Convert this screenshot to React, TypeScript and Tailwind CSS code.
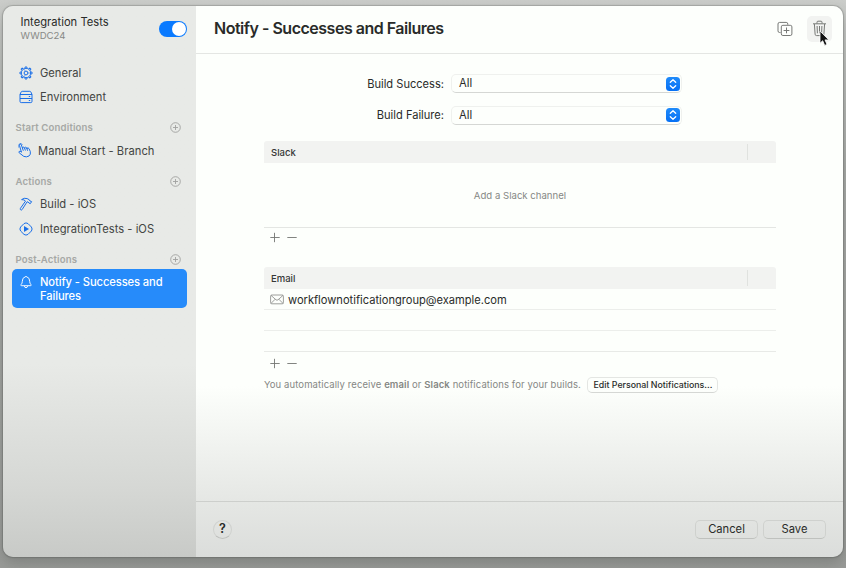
import React from "react";

function GearIcon() {
  const teeth = Array.from({ length: 8 }, (_, i) => i * 45);
  return (
    <svg width="14" height="14" viewBox="0 0 14 14" fill="none" stroke="#1a6fe8" strokeWidth="1">
      <circle cx="7" cy="7" r="4.7" />
      <circle cx="7" cy="7" r="1.9" />
      {teeth.map((a) => (
        <path key={a} d="M5.9 2 L6.3 .9 H7.7 L8.1 2" transform={`rotate(${a} 7 7)`} />
      ))}
      <path d="M6.2 5.1 L5 3 M8.9 7 H11.6 M6.2 8.8 L5 11" strokeWidth="0.5" />
    </svg>
  );
}

function ServerIcon() {
  return (
    <svg width="14" height="14" viewBox="0 0 14 14" fill="none" stroke="#1a6fe8" strokeWidth="1">
      <path d="M1 4.4 L2.2 1.9 Q2.5 1.3 3.2 1.3 H10.8 Q11.5 1.3 11.8 1.9 L13 4.4 V11.4 Q13 12.6 11.8 12.6 H2.2 Q1 12.6 1 11.4 Z M1 4.5 H13 M1 8.5 H13" />
      <path d="M9.8 6.5 H11.2 M9.8 10.5 H11.2" />
    </svg>
  );
}

function HandIcon() {
  return (
    <svg width="14" height="15" viewBox="0 0 14 15" fill="none" stroke="#1a6fe8" strokeWidth="1" strokeLinejoin="round" strokeLinecap="round">
      <path d="M3.3 8.8 L1.5 2.5 Q1.2 1.2 2.1 1 Q3 .8 3.4 2 L4.6 5.6 V4.5 Q5.2 3.8 6.2 4.4 L6.7 5.5 V4.7 Q7.5 3.7 8.6 4.7 L9 6 V5.2 Q10.2 4.4 11 5.6 L12.3 8.5 Q13 11.5 11 13 Q8.5 14.5 5.8 13.4 L1.2 9.8 Q.5 9 1.2 8.4 Q2 8 3.3 8.8 Z" />
      <path d="M4.6 5.6 L5.2 7.4 M6.7 5.5 L7.3 7.2 M9 6 L9.5 7.4" />
      <path d="M.7 4.3 Q0 1.5 1.8 .5 Q3.6 0 4.4 1.6" strokeWidth="0.6" />
    </svg>
  );
}

function HammerIcon() {
  return (
    <svg width="14" height="14" viewBox="0 0 14 14" fill="none" stroke="#1a6fe8" strokeWidth="1" strokeLinejoin="round">
      <path d="M2.6 2.6 Q5 .5 8.2 1.6 L10.3 2.8 L11 4 L12.6 4.6 L11.4 6.6 L10 6.1 L9.2 5 L8.1 4.8 L3.1 12.6 Q2.4 13.4 1.6 12.8 Q.9 12.2 1.4 11.4 L6.5 4.1 Q5.3 2.5 2.6 2.6 Z" />
    </svg>
  );
}

function TestIcon() {
  return (
    <svg width="14" height="14" viewBox="0 0 14 14" fill="none" stroke="#1a6fe8" strokeWidth="1">
      <path d="M5 1.6 Q7 .2 9 1.6 L12.4 5 Q13.8 7 12.4 9 L9 12.4 Q7 13.8 5 12.4 L1.6 9 Q.2 7 1.6 5 Z" />
      <path d="M5 4 L10 7 L5 10 Z" fill="#1a6fe8" stroke="none" />
    </svg>
  );
}

function BellIcon() {
  return (
    <svg width="14" height="14" viewBox="0 0 14 14" fill="none" stroke="#f2f8ff" strokeWidth="1" strokeLinejoin="round">
      <path d="M2.2 10.7 Q1.5 10.3 2.1 9.5 Q3.3 8.4 3.3 6.4 Q3.3 2.6 6 2 Q7 .8 8 2 Q10.7 2.6 10.7 6.4 Q10.7 8.4 11.9 9.5 Q12.5 10.3 11.8 10.7 Z M5.4 10.9 Q5.6 12.7 7 12.7 Q8.4 12.7 8.6 10.9" />
    </svg>
  );
}

function PlusCircle() {
  return (
    <svg width="11" height="11" viewBox="0 0 11 11" fill="none" stroke="#a0a29f" strokeWidth="0.9">
      <circle cx="5.5" cy="5.5" r="4.8" />
      <path d="M5.5 3 V8 M3 5.5 H8" />
    </svg>
  );
}

function SectionHeader({ label }: { label: string }) {
  return (
    <div className="flex h-5 items-center justify-between pl-[12.5px] pr-[15px] text-[9.6px] font-semibold tracking-[0.15px] text-[#a6a8a5]">
      <span className="pt-[2px]">{label}</span>
      <PlusCircle />
    </div>
  );
}

function NavItem({ icon, label, hand = false }: { icon: React.ReactNode; label: string; hand?: boolean }) {
  return (
    <div className="flex h-[24.5px] items-center pl-4 text-[11.2px] text-[#434543]">
      <span className={hand ? "-ml-px mr-[6px]" : "mr-[7px]"}>{icon}</span>
      <span className={hand ? "whitespace-nowrap pt-[2px] tracking-[0.03px]" : "whitespace-nowrap pt-px"}>{label}</span>
    </div>
  );
}

function Sidebar() {
  return (
    <aside className="w-[193px] shrink-0 bg-linear-to-b from-[#e8eae7] from-65% via-[#d5d7d4] via-88% to-[#c8cac7]">
      <div className="flex h-[54.5px] justify-between pl-[17.5px] pr-[9px]">
        <div className="pt-[9px]">
          <div className="text-[11.2px] leading-[14px] text-[#292b29]">Integration Tests</div>
          <div className="text-[9.6px] leading-[13px] text-[#878986]">WWDC24</div>
        </div>
        <div className="mt-[15px] flex h-4 w-7 justify-end rounded-full bg-[#0a7aff] p-px">
          <div className="size-[14px] rounded-full bg-white" />
        </div>
      </div>
      <NavItem icon={<GearIcon />} label="General" />
      <NavItem icon={<ServerIcon />} label="Environment" />
      <div className="h-[7.5px]" />
      <SectionHeader label="Start Conditions" />
      <div className="h-px" />
      <NavItem icon={<HandIcon />} label="Manual Start - Branch" hand />
      <div className="h-[8.5px]" />
      <SectionHeader label="Actions" />
      <div className="h-px" />
      <NavItem icon={<HammerIcon />} label="Build - iOS" />
      <NavItem icon={<TestIcon />} label="IntegrationTests - iOS" />
      <div className="h-[8px]" />
      <SectionHeader label="Post-Actions" />
      <div className="ml-[9px] mr-[9px] flex h-[39px] rounded-[5px] bg-[#268bfa] pl-[7px] pt-[6px] text-white">
        <span className="mr-[7px]"><BellIcon /></span>
        <span className="text-[11.2px] font-medium leading-[14px] tracking-[-0.1px]">Notify - Successes and<br />Failures</span>
      </div>
    </aside>
  );
}

function SelectRow({ label }: { label: string }) {
  return (
    <div className="flex h-[19px] items-center">
      <span className="w-[255px] shrink-0 pr-[7px] pt-px text-right text-[11.1px] text-[#292b29]">{label}</span>
      <div className="flex h-[19px] w-[231px] items-center justify-between rounded-[5px] border border-[#eff1ee] border-b-[#d5d7d4] pl-[7px] pr-[1px] text-[11.2px] text-[#292b29]">
        <span>All</span>
        <span className="flex size-[14px] items-center justify-center rounded-[3.5px] bg-linear-to-b from-[#208bfa] to-[#0670f5]">
          <svg width="8" height="12" viewBox="0 0 8 12" fill="none" stroke="white" strokeWidth="1.3" strokeLinecap="round" strokeLinejoin="round">
            <path d="M1.3 4.3 L4 1.8 L6.7 4.3 M1.3 7.7 L4 10.2 L6.7 7.7" />
          </svg>
        </span>
      </div>
    </div>
  );
}

function TableHeader({ label }: { label: string }) {
  return (
    <div className="flex h-[22px] items-center justify-between rounded-t-[3px] bg-[#f2f3f1] pl-[7px] pr-[28px] text-[9.5px] font-medium text-[#363836]">
      <span className="pt-[2px]">{label}</span>
      <span className="h-4 w-px bg-[#e0e2df]" />
    </div>
  );
}

function AddRemove() {
  return (
    <svg className="ml-[5px] block" width="30" height="20" viewBox="0 0 30 20" fill="none" stroke="#747673" strokeWidth="0.9">
      <path d="M1.3 9.5 H10.7 M5.5 4.8 V14.2 M18.3 9.5 H27.7" />
    </svg>
  );
}

export default function App() {
  return (
    <div className="h-[568px] w-[846px] overflow-hidden bg-linear-to-b from-[#cbcdca] from-0% via-[#a9aba8] via-30% to-[#999b98] px-[3px] pt-[6px] font-['Inter','Liberation_Sans',sans-serif]">
      <div className="flex h-[551px] overflow-hidden rounded-[10px] shadow-[0_0_1px_1px_rgba(60,65,60,0.25),0_6px_14px_rgba(50,55,50,0.25)]">
        <Sidebar />
        <main className="flex min-w-0 flex-1 flex-col bg-linear-to-b from-[#fdfffc] from-69% via-[#e5e7e4] via-90% to-[#dbdddb]">
          <header className="flex h-[48px] shrink-0 items-center justify-between border-b border-[#e4e6e3] pl-[18px] pr-[11px]">
            <h1 className="pb-[4px] text-[16px] font-semibold tracking-[-0.49px] text-[#292b29]">Notify - Successes and Failures</h1>
            <div className="flex items-center">
              <svg className="mb-px mr-[14px]" width="16" height="16" viewBox="0 0 16 16" fill="none" stroke="#777976" strokeWidth="1">
                <path d="M3.5 11.5 H2.6 Q1 11.5 1 9.9 V3 Q1 1.4 2.6 1.4 H9.2 Q10.8 1.4 10.8 3 V3.8" />
                <rect x="4.3" y="4.3" width="10.6" height="10.2" rx="1.6" />
                <path d="M9.5 6.5 V12.3 M6.6 9.5 H12.4" />
              </svg>
              <div className="relative mb-[2px] flex h-[26px] w-[25px] items-center justify-center rounded-[5px] bg-[#f2f3f1]">
                <svg width="15" height="17" viewBox="0 0 15 17" fill="none" stroke="#777976" strokeWidth="1">
                  <path d="M1 3.8 H14 M5 3.6 V2.2 Q5 1.2 6 1.2 H9 Q10 1.2 10 2.2 V3.6 M2.4 4 L3.1 14.2 Q3.2 15.6 4.6 15.6 H10.4 Q11.8 15.6 11.9 14.2 L12.6 4 M5.1 6 L5.4 13.3 M7.5 6 V13.3 M9.9 6 L9.6 13.3" />
                </svg>
                <svg className="absolute left-[12px] top-[14px]" width="11" height="17" viewBox="0 0 11 17">
                  <path d="M1 1 V13.2 L3.7 10.7 L5.7 15.4 L8 14.4 L6 9.9 H9.8 Z" fill="#111" stroke="white" strokeWidth="0.8" />
                </svg>
              </div>
            </div>
          </header>
          <div className="flex flex-1 flex-col pt-5">
            <div className="flex flex-col gap-[12.5px]">
              <SelectRow label="Build Success:" />
              <SelectRow label="Build Failure:" />
            </div>
            <section className="ml-[68px] mt-[16.5px] w-[512px]">
              <TableHeader label="Slack" />
              <div className="flex h-[65px] items-center justify-center border-b border-[#e4e6e3] pt-[2px] text-[9.6px] text-[#868885]">Add a Slack channel</div>
              <AddRemove />
            </section>
            <section className="ml-[68px] mt-[19px] w-[512px]">
              <TableHeader label="Email" />
              <div className="flex h-[21px] items-center border-b border-[#eceeeb] pl-[6px] text-[11.12px] text-[#292b29]">
                <svg className="mr-[4px]" width="14" height="11" viewBox="0 0 14 11" fill="none" stroke="#858784" strokeWidth="0.8">
                  <rect x="0.6" y="1" width="12.8" height="8.8" rx="1.2" />
                  <path d="M1 1.4 L6 5.8 Q7 6.6 8 5.8 L13 1.4 M1 9.4 L5.2 5.2 M13 9.4 L8.8 5.2" />
                </svg>
                <span className="pt-[2px]">workflownotificationgroup@example.com</span>
              </div>
              <div className="h-[21px] border-b border-[#eceeeb]" />
              <div className="h-[21px] border-b border-[#e8eae7]" />
              <div className="pt-[2px]"><AddRemove /></div>
              <div className="mt-[3px] flex h-4 items-center whitespace-nowrap text-[9.5px] text-[#858784]">
                <span className="tracking-[0.1px]">You automatically receive <b className="font-semibold">email</b> or <b className="font-semibold">Slack</b> notifications for your builds.</span>
                <span className="ml-[6.5px] flex h-4 w-[131px] shrink-0 items-center justify-center rounded-[5px] border border-[#e4e6e3] border-b-[#d5d7d4] text-[8.8px] font-medium text-[#292b29]">Edit Personal Notifications...</span>
              </div>
            </section>
          </div>
          <footer className="flex h-[56px] shrink-0 items-center border-t border-[#cdcfcc] pl-[17px] pr-[17px] text-[11.2px] text-[#292b29]">
            <span className="flex size-[19px] items-center justify-center rounded-full border border-[#cfd1ce] border-b-[#bfc1be] text-[12.5px] font-semibold">?</span>
            <span className="ml-auto flex h-[19px] w-[63px] items-center justify-center rounded-[5px] border border-[#cfd1ce] border-b-[#bfc1be]">Cancel</span>
            <span className="ml-[5px] flex h-[19px] w-[63px] items-center justify-center rounded-[5px] border border-[#cfd1ce] border-b-[#bfc1be]">Save</span>
          </footer>
        </main>
      </div>
    </div>
  );
}
